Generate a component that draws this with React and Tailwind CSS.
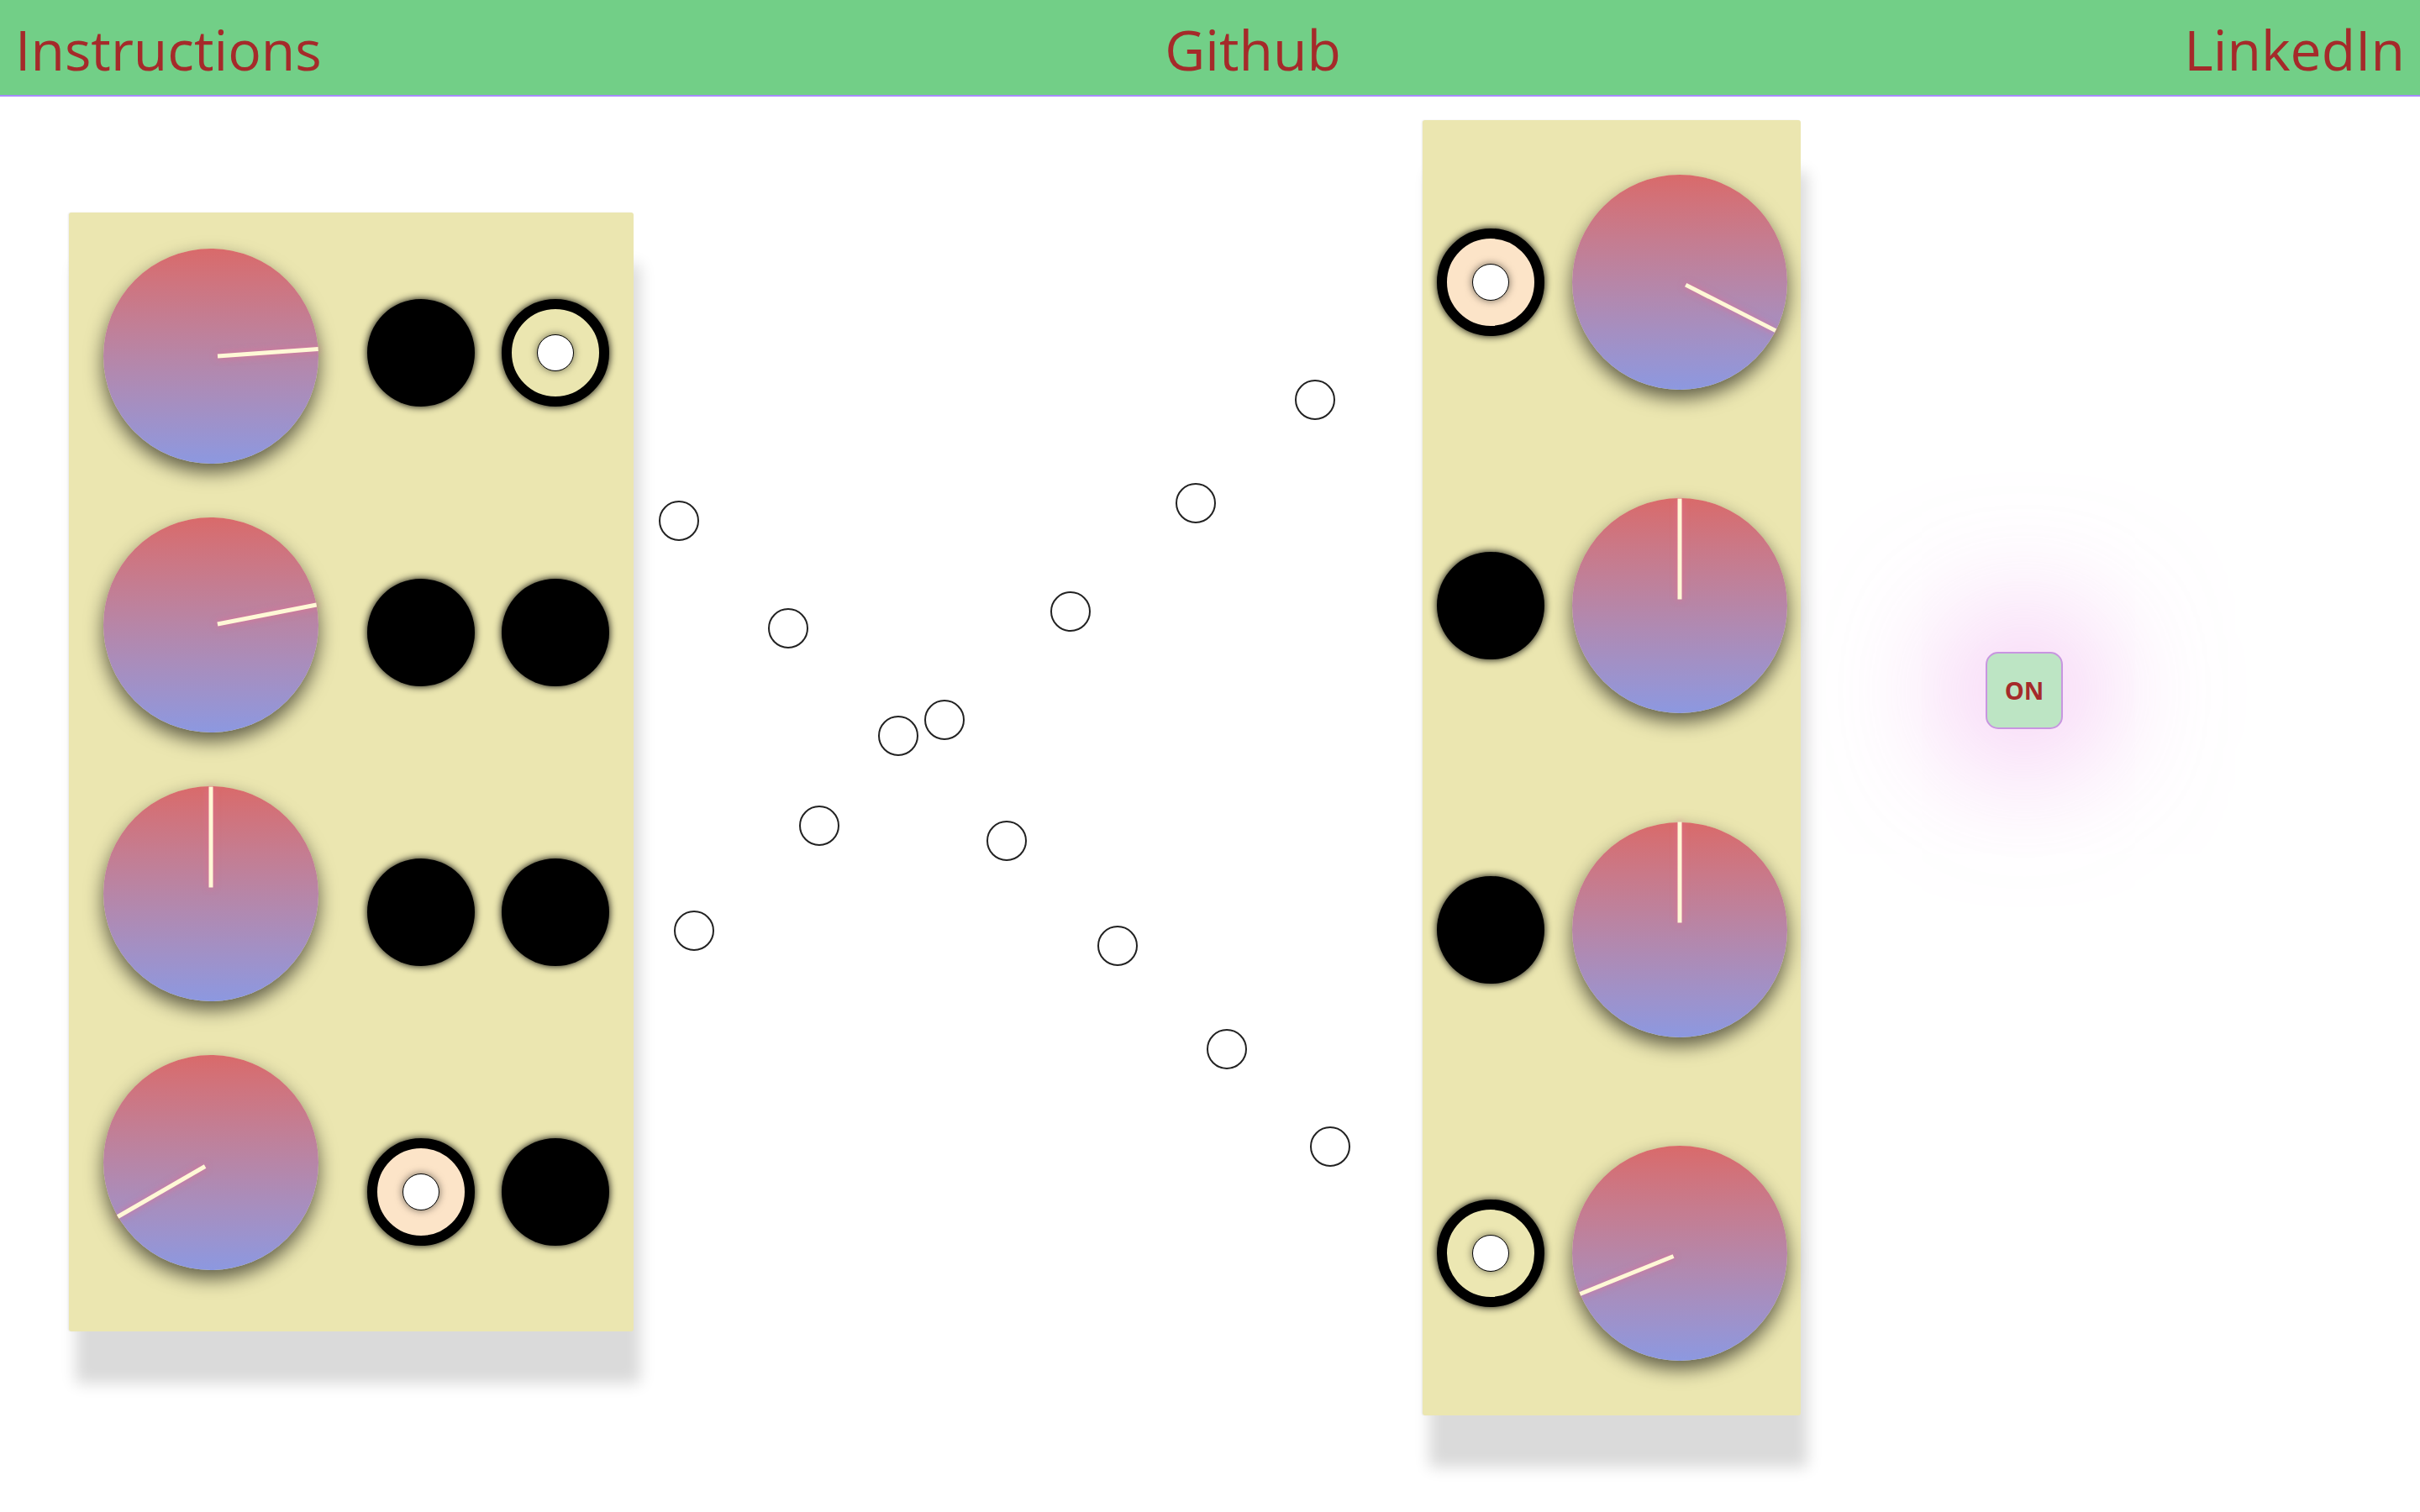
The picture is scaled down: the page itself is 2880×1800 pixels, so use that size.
import React from 'react';

const leftKnobs = [86, 79, 0, 240];
const leftJacks = [
  [null, 'bg-[#ebe6b0]'],
  [null, null],
  [null, null],
  ['bg-[#fce4c8]', null],
];
const rightRows = [
  { jack: 'bg-[#fce4c8]', angle: 117 },
  { jack: null, angle: 0 },
  { jack: null, angle: 0 },
  { jack: 'bg-[#ece7b2]', angle: 248 },
];

// cable points, centers in page coords
const dots = [
  [808, 620], [938, 748], [1069, 876], [1124, 857], [975, 983], [826, 1108],
  [1198, 1001], [1330, 1126], [1460, 1249], [1583, 1365], [1274, 728], [1423, 599], [1565, 476],
];

const Knob = ({ angle }) => (
  <div className="relative w-[256px] h-[256px] shrink-0 rounded-full bg-linear-to-b from-[#d96a6a] to-[#8c98e0] shadow-[0_10px_22px_rgba(0,0,0,0.6)]">
    <div
      className="absolute left-1/2 top-1/2 w-[120px] h-[5px] -mt-[2.5px] origin-left bg-[#fff8d6] shadow-[0_0_8px_rgba(230,110,150,0.8)]"
      style={{ transform: `rotate(${angle - 90}deg) translateX(8px)` }}
    />
  </div>
);

const Jack = ({ fill }) =>
  fill ? (
    <div className={`w-[128px] h-[128px] shrink-0 rounded-full border-[12px] border-black ${fill} flex items-center justify-center shadow-[0_0_10px_#000]`}>
      <div className="w-[44px] h-[44px] rounded-full bg-white border border-black shadow-[0_0_10px_rgba(0,0,0,0.55)]" />
    </div>
  ) : (
    <div className="w-[128px] h-[128px] shrink-0 rounded-full bg-black shadow-[0_0_10px_#000]" />
  );

const App = () => {
  return (
    <div className="min-h-screen bg-white font-['Open_Sans',sans-serif] overflow-hidden">
      <header className="h-[115px] pt-[2px] bg-[#72cf87] border-b-2 border-[#a78bfa] flex items-center justify-between pl-[18px] pr-[18px] text-[66px] leading-none text-[#a52a2a]">
        <span>Instructions</span>
        <span>Github</span>
        <span>LinkedIn</span>
      </header>

      <main className="relative flex items-start h-[1685px]">
        {/* left module */}
        <div className="ml-[82px] mt-[138px] w-[672px] h-[1332px] rounded-[3px] bg-[#ebe6b0] shadow-[8px_62px_18px_#dadada,-1px_0_2px_rgba(0,0,0,0.08)] flex">
          <div className="pl-[41px] pt-[43px] flex flex-col gap-[64px]">
            {leftKnobs.map((a, i) => <Knob key={i} angle={a} />)}
          </div>
          <div className="ml-[58px] flex flex-col justify-around">
            {leftJacks.map((row, i) => (
              <div key={i} className="flex gap-[32px]">
                <Jack fill={row[0]} />
                <Jack fill={row[1]} />
              </div>
            ))}
          </div>
        </div>

        {/* right module */}
        <div className="ml-[939px] mt-[28px] w-[450px] h-[1542px] rounded-[3px] bg-[#ebe6b0] shadow-[8px_62px_18px_#dadada,-1px_0_2px_rgba(0,0,0,0.08)] flex flex-col justify-around px-[17px]">
          {rightRows.map((r, i) => (
            <div key={i} className="flex items-center gap-[33px]">
              <Jack fill={r.jack} />
              <Knob angle={r.angle} />
            </div>
          ))}
        </div>

        {/* power */}
        <div className="ml-[220px] mt-[661px]">
          <button className="w-[92px] h-[92px] rounded-[15px] border-2 border-[#c895e0] bg-[#bde5c4] text-[29px] font-bold text-[#a52a2a] flex items-center justify-center shadow-[0_0_150px_40px_rgba(240,175,238,0.7)]">
            ON
          </button>
        </div>

        {dots.map(([x, y], i) => (
          <div
            key={i}
            className="absolute w-[48px] h-[48px] rounded-full border-2 border-[#222]"
            style={{ left: x - 24, top: y - 24 - 115 }}
          />
        ))}
      </main>
    </div>
  );
};

export default App;
